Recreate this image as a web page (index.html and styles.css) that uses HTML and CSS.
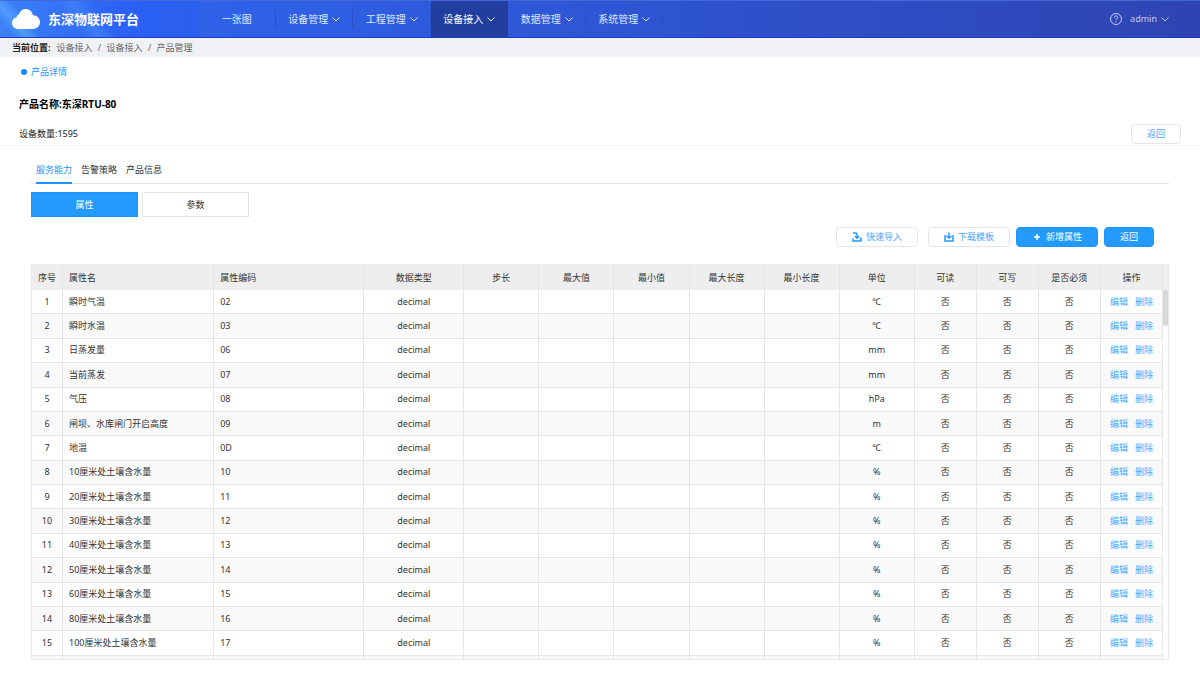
FILE: index.html
```html
<!DOCTYPE html>
<html lang="zh-CN">
<head>
    <meta charset="UTF-8">
    <meta name="viewport" content="width=device-width, initial-scale=1.0">
    <title>东深物联网平台</title>
    <link rel="stylesheet" href="styles.css">
</head>
<body>
    <header class="topbar">
        <div class="brand">
            <svg class="cloud" viewBox="0 0 28 20"><path d="M6.500 20C2.800 20 0 17.500 0 14.200C0 11.200 2 9 4.700 8.300C4.700 7 5.500 5.800 7 5.300C8 2 10.400 0 13.600 0C17.500 0 20.300 2.600 20.900 6.300C25 6.500 28 9.300 28 13.100C28 17 25 20 21.200 20Z"/></svg>
            <span>东深物联网平台</span>
        </div>
        <nav class="menu">
            <a href="#">一张图</a>
            <a href="#">设备管理<svg class="arrow" viewBox="0 0 8 5"><path d="M.5.5 4 4 7.500.5"/></svg></a>
            <a href="#">工程管理<svg class="arrow" viewBox="0 0 8 5"><path d="M.5.5 4 4 7.500.5"/></svg></a>
            <a href="#" class="active">设备接入<svg class="arrow" viewBox="0 0 8 5"><path d="M.5.5 4 4 7.500.5"/></svg></a>
            <a href="#">数据管理<svg class="arrow" viewBox="0 0 8 5"><path d="M.5.5 4 4 7.500.5"/></svg></a>
            <a href="#">系统管理<svg class="arrow" viewBox="0 0 8 5"><path d="M.5.5 4 4 7.500.5"/></svg></a>
        </nav>
        <div class="user">
            <svg class="help" viewBox="0 0 12 12"><circle cx="6" cy="6" r="5.500"/><path class="mark" d="M4.300 4.800C4.300 3.600 5 3 6 3S7.700 3.600 7.700 4.500C7.700 5.600 6 5.700 6 7M6 8.100V9.200"/></svg>
            <a href="#">admin<svg class="arrow" viewBox="0 0 8 5"><path d="M.5.5 4 4 7.500.5"/></svg></a>
        </div>
    </header>

    <div class="breadcrumb">
        <b>当前位置:</b>
        <a href="#">设备接入</a><i>/</i><a href="#">设备接入</a><i>/</i><a href="#">产品管理</a>
    </div>

    <section class="product">
        <div class="section-title">产品详情</div>
        <h1>产品名称:东深RTU-80</h1>
        <div class="product-row">
            <span>设备数量:1595</span>
            <button class="btn small">返回</button>
        </div>
    </section>

    <main class="content">
        <div class="tabs">
            <a href="#" class="active">服务能力</a>
            <a href="#">告警策略</a>
            <a href="#">产品信息</a>
        </div>
        <div class="switch">
            <button class="active">属性</button>
            <button>参数</button>
        </div>
        <div class="toolbar">
            <button class="btn"><svg class="icon" viewBox="0 0 10 10"><path d="M1 1H3.500Q5 1 5 2.500V6M2.800 4 5 6.200 7.200 4M1 6.500V9H9V6.500H7.500"/></svg>快速导入</button>
            <button class="btn template"><svg class="icon" viewBox="0 0 10 10"><path d="M5 .5V6M3 4.200 5 6.200 7 4.200M2.500 4H1V9H9V4H7.500"/></svg>下载模板</button>
            <button class="btn primary"><svg class="icon plus" viewBox="0 0 10 10"><path d="M5 2V8M2 5H8"/></svg>新增属性</button>
            <button class="btn primary small">返回</button>
        </div>

        <div class="table-box">
            <table>
                <colgroup>
                    <col class="c-index"><col class="c-name"><col class="c-code"><col class="c-type">
                    <col class="c-num" span="6">
                    <col class="c-flag" span="4">
                </colgroup>
                <thead>
                    <tr>
                        <th>序号</th>
                        <th class="left">属性名</th>
                        <th class="left">属性编码</th>
                        <th>数据类型</th>
                        <th>步长</th>
                        <th>最大值</th>
                        <th>最小值</th>
                        <th>最大长度</th>
                        <th>最小长度</th>
                        <th>单位</th>
                        <th>可读</th>
                        <th>可写</th>
                        <th>是否必须</th>
                        <th>操作</th>
                    </tr>
                </thead>
                <tbody id="attrBody"></tbody>
            </table>
            <div class="scroll-thumb"></div>
        </div>
    </main>

    <script>
        const attrs = [
            ['瞬时气温', '02', '℃'],
            ['瞬时水温', '03', '℃'],
            ['日蒸发量', '06', 'mm'],
            ['当前蒸发', '07', 'mm'],
            ['气压', '08', 'hPa'],
            ['闸坝、水库闸门开启高度', '09', 'm'],
            ['地温', '0D', '℃'],
            ['10厘米处土壤含水量', '10', '%'],
            ['20厘米处土壤含水量', '11', '%'],
            ['30厘米处土壤含水量', '12', '%'],
            ['40厘米处土壤含水量', '13', '%'],
            ['50厘米处土壤含水量', '14', '%'],
            ['60厘米处土壤含水量', '15', '%'],
            ['80厘米处土壤含水量', '16', '%'],
            ['100厘米处土壤含水量', '17', '%']
        ];

        const body = document.getElementById('attrBody');
        attrs.forEach(([name, code, unit], i) => {
            body.insertRow().innerHTML = `
                <td>${i + 1}</td>
                <td class="left">${name}</td>
                <td class="left">${code}</td>
                <td>decimal</td>
                <td></td><td></td><td></td><td></td><td></td>
                <td>${unit}</td>
                <td>否</td><td>否</td><td>否</td>
                <td class="actions"><a href="#">编辑</a><a href="#">删除</a></td>`;
        });
        // next row, only its top edge shows
        body.insertRow().innerHTML = '<td></td>'.repeat(14);
    </script>
</body>
</html>
```
FILE: styles.css
```css
* {
    box-sizing: border-box;
}
body {
    margin: 0;
    background: #fff;
    color: #333;
    font-family: "Noto Sans", "Noto Sans CJK SC", sans-serif;
    font-size: 9px;
    line-height: 14px;
}
a {
    color: inherit;
    text-decoration: none;
}
button {
    font: inherit;
    cursor: pointer;
}

/* top bar */
.topbar {
    display: flex;
    height: 38px;
    border-top: 1px solid #4568d8;
    border-bottom: 1px solid #1c3bc4;
    background: linear-gradient(90deg, #2f62ea 198px, #2e50c9 66%, #2f44b2);
    color: #dfe8ff;
}
.brand {
    display: flex;
    align-items: center;
    gap: 8px;
    width: 198px;
    padding-left: 12px;
    background:
        linear-gradient(50deg, transparent 6%, #4f9bff 12%, transparent 18%, transparent 36%, #3d7dfa 44%, transparent 52%),
        linear-gradient(90deg, #3d82fa, #2b62f4 60%, #2b5ff0);
    color: #fff;
    font-size: 13px;
    font-weight: bold;
}
.cloud {
    width: 28px;
    height: 20px;
    fill: #fff;
}
.menu {
    display: flex;
    width: 465px;
}
.menu a {
    flex: 1;
    display: flex;
    align-items: center;
    justify-content: center;
    font-size: 10px;
    background: linear-gradient(#2a50c8, #2a50c8) right center / 1px 18px no-repeat;
}
.menu .active {
    background: #223f9f;
    color: #fff;
}
.arrow {
    width: 8px;
    height: 5px;
    margin-left: 4px;
    fill: none;
    stroke: currentColor;
}
.user {
    display: flex;
    align-items: center;
    gap: 8px;
    margin-left: auto;
    padding-right: 31px;
    color: #c3cdf0;
}
.user a {
    display: flex;
    align-items: center;
}
.help {
    width: 12px;
    height: 12px;
    fill: none;
    stroke: currentColor;
}

/* breadcrumb */
.breadcrumb {
    display: flex;
    align-items: center;
    height: 19px;
    padding-left: 12px;
    background: #f0f1f5;
    color: #666;
}
.breadcrumb b {
    margin-right: 6px;
    color: #222;
}
.breadcrumb i {
    width: 14px;
    text-align: center;
    font-style: normal;
}

/* product summary */
.product {
    padding: 8px 19px 1px;
    border-bottom: 1px solid #f5f5f5;
    color: #222;
}
.section-title {
    display: flex;
    align-items: center;
    gap: 4px;
    padding-left: 2px;
    color: #2196ff;
}
.section-title::before {
    content: "";
    width: 6px;
    height: 6px;
    border-radius: 50%;
    background: #1489ff;
}
h1 {
    margin: 18px 0 13px;
    color: #000;
    font-size: 10px;
    line-height: 14px;
}
.product-row {
    display: flex;
    align-items: center;
    justify-content: space-between;
}
.btn {
    display: flex;
    align-items: center;
    justify-content: center;
    gap: 4px;
    width: 82px;
    height: 20px;
    padding: 0;
    border: 1px solid #e3e5e8;
    border-radius: 4px;
    background: #fff;
    color: #4ba6ff;
}
.btn.small {
    width: 50px;
}
.btn.primary {
    border-color: #1e94ff;
    background: #249aff;
    color: #fff;
}

/* tabs */
.content {
    padding: 17px 31px 14px;
}
.tabs {
    display: flex;
    gap: 9px;
    padding-left: 5px;
    border-bottom: 1px solid #e4e4e6;
}
.tabs a {
    height: 20px;
    border-bottom: 2px solid transparent;
}
.tabs .active {
    margin-bottom: -1px;
    height: 21px;
    border-color: #1e94ff;
    color: #2196ff;
}
.switch {
    display: flex;
    gap: 4px;
    margin-top: 8px;
}
.switch button {
    width: 107px;
    height: 25px;
    border: 1px solid #e3e3e5;
    background: #fff;
    color: #333;
}
.switch .active {
    border-color: #1e94ff;
    background: #249aff;
    color: #fff;
}
.toolbar {
    display: flex;
    justify-content: flex-end;
    gap: 6px;
    margin: 10px 15px 17px 0;
}
.template {
    margin-left: 4px;
}
.icon {
    width: 10px;
    height: 10px;
    fill: none;
    stroke: #249aff;
    stroke-width: 1.5;
}
.plus {
    stroke: #fff;
}

/* attribute table, the 5px on the right holds the scrollbar */
.table-box {
    position: relative;
    height: 396px;
    padding-right: 5px;
    overflow: hidden;
    border: 1px solid #e8e8ea;
    border-top: none;
}
table {
    width: 100%;
    height: 416px;
    table-layout: fixed;
    border-collapse: separate;
    border-spacing: 0;
}
.c-index { width: 31px; }
.c-name { width: 151px; }
.c-code { width: 150px; }
.c-type { width: 100px; }
.c-num { width: 75px; }
.c-flag { width: 62px; }
thead {
    background: #eee;
    box-shadow: 5px 0 0 #eee;
}
th, td {
    height: 24px;
    padding: 0;
    border-right: 1px solid #e6e6e8;
    border-bottom: 1px solid #e6e6e8;
    text-align: center;
    font-weight: normal;
}
th {
    height: 26px;
    padding-top: 2px;
    border-bottom-color: #eee;
}
.left {
    padding-left: 6px;
    text-align: left;
}
tbody tr:nth-child(even) {
    background: #f9f9f9;
}
.actions a {
    color: #4ba6ff;
}
.actions a + a {
    margin-left: 7px;
}
.scroll-thumb {
    position: absolute;
    top: 26px;
    right: 0;
    width: 5px;
    height: 36px;
    border-radius: 2px;
    background: #d8d8da;
}
```
